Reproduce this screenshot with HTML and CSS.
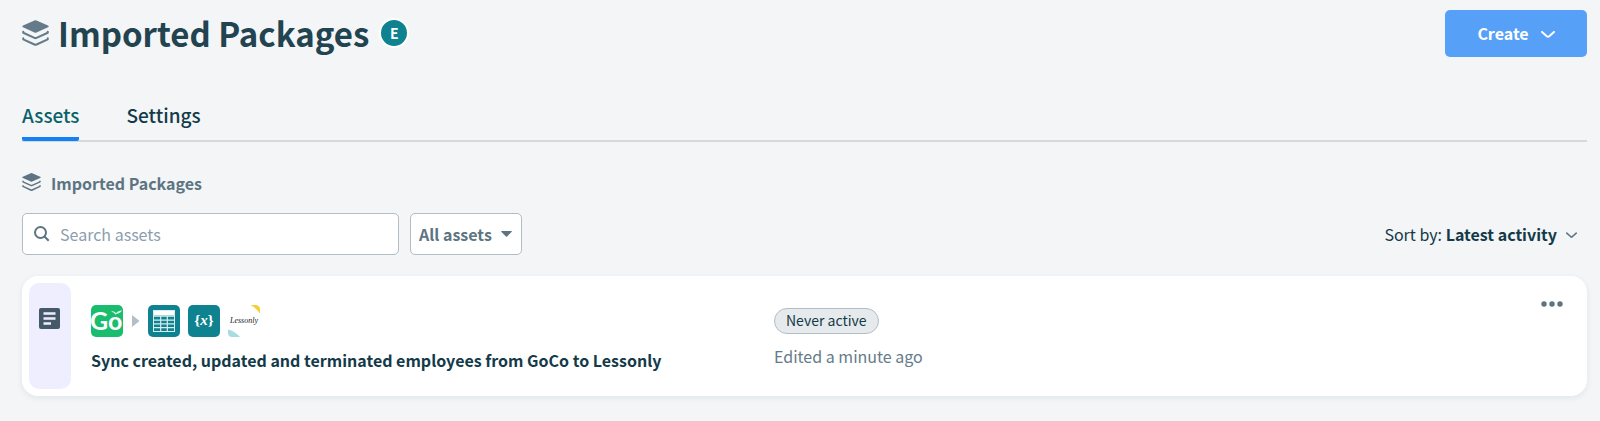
FILE: index.html
```html
<!DOCTYPE html>
<html lang="en">
<head>
<meta charset="utf-8">
<meta name="viewport" content="width=device-width, initial-scale=1">
<title>Imported Packages</title>
<link rel="stylesheet" href="styles.css">
</head>
<body>
<svg class="sprite" aria-hidden="true">
  <symbol id="layers" viewBox="0 0 26 25">
    <path d="M12 .4q1-.5 2 0l11 4.900q1.600.8 0 1.600l-11 5q-1 .5-2 0L1 6.900q-1.600-.8 0-1.600z" fill="currentColor"/>
    <path d="M1.200 11.300v.9L12 17.200q1 .5 2 0l10.800-5v-.9M1.200 17.700v.9L12 23.600q1 .5 2 0l10.800-5v-.9" fill="none" stroke="currentColor" stroke-width="2" stroke-linecap="round" stroke-linejoin="round"/>
  </symbol>
  <symbol id="chevron" viewBox="0 0 14 8">
    <path d="M1 1l4.800 4.300q1.200 1 2.400 0L13 1" fill="none" stroke="currentColor" stroke-width="2" stroke-linecap="round"/>
  </symbol>
</svg>
<main class="page">
  <header class="header">
    <svg class="header-icon" aria-hidden="true"><use href="#layers"/></svg>
    <h1 class="title">Imported Packages</h1>
    <span class="avatar">E</span>
    <button class="create" type="button">Create <svg class="create-chevron" aria-hidden="true"><use href="#chevron"/></svg></button>
  </header>
  <nav class="tabs">
    <a class="tab tab-active" href="#assets">Assets</a>
    <a class="tab" href="#settings">Settings</a>
  </nav>
  <div class="crumb">
    <svg class="crumb-icon" aria-hidden="true"><use href="#layers"/></svg>
    <span>Imported Packages</span>
  </div>
  <div class="toolbar">
    <label class="search">
      <svg class="search-icon" viewBox="0 0 16 16" aria-hidden="true"><circle cx="6.500" cy="6.500" r="5.500"/><path d="M10.500 10.500l4.200 4.200"/></svg>
      <input class="search-input" type="search" placeholder="Search assets" aria-label="Search assets">
    </label>
    <div class="filter">
      <select class="filter-select" aria-label="Asset type"><option>All assets</option></select>
      <svg class="filter-arrow" viewBox="0 0 11 6" aria-hidden="true"><path d="M.5 0h10q.7.300 0 1L6 5.600q-.5.400-1 0L.5 1q-.7-.7 0-1z"/></svg>
    </div>
    <button class="sort" type="button"><span>Sort by: <b>Latest activity</b></span><svg class="sort-chevron" aria-hidden="true"><use href="#chevron"/></svg></button>
  </div>
  <article class="card">
    <div class="kind">
      <svg class="kind-icon" viewBox="0 0 21 21" aria-hidden="true"><rect width="21" height="21" rx="2" fill="#455a68"/><path d="M4.500 5.500h12M4.500 10.500h12M4.500 15.500h7.500" stroke="#efeeff" stroke-width="2.400"/></svg>
    </div>
    <div class="recipe">
      <div class="apps">
        <svg class="app" viewBox="0 0 32 32" role="img" aria-label="GoCo">
          <clipPath id="tile"><rect width="32" height="32" rx="5"/></clipPath>
          <g clip-path="url(#tile)"><rect width="32" height="32" fill="#1abd6e"/>
          <text class="go" x="-1" y="25">Go</text>
          <path d="M20 6.500q3-.8 5 1.500Q27.500 5 31 5.500q-1.500 3-5.500 3.200l-1 1q-1-2.200-4.500-3.200z" fill="#dff7ea"/></g>
        </svg>
        <svg class="play" viewBox="0 0 7 12" aria-hidden="true"><path d="M0 0l7 5.500v1L0 12z" fill="#b4c0c9"/></svg>
        <svg class="app" viewBox="0 0 32 32" role="img" aria-label="Lookup table">
          <rect width="32" height="32" rx="5" fill="#0f8290"/>
          <rect x="5.500" y="5.500" width="21" height="21" fill="none" stroke="#d9edef"/>
          <path d="M6 6h20v4.500H6z" fill="#fff"/>
          <path d="M5.500 11.100h21M5.500 15.100h21M5.500 18.900h21M5.500 22.700h21M12.700 10.500v16M19.300 10.500v16" stroke="#d9edef" stroke-width="1.200"/>
        </svg>
        <svg class="app" viewBox="0 0 32 32" role="img" aria-label="Variables">
          <rect width="32" height="32" rx="5" fill="#0f8290"/>
          <text class="var" x="16" y="20">{<tspan class="var-x">x</tspan>}</text>
        </svg>
        <svg class="app" viewBox="0 0 32 32" role="img" aria-label="Lessonly">
          <path d="M22.500 0H27q5 0 5 5v3.500Q29 3.500 22.500 0z" fill="#f7cc2f"/>
          <path d="M0 24.500q7 1.500 12 7.500H4q-4 0-4-4z" fill="#a9dce0"/>
          <text class="lesson" x="16" y="18">Lessonly</text>
        </svg>
      </div>
      <h2 class="name">Sync created, updated and terminated employees from GoCo to Lessonly</h2>
    </div>
    <div class="status">
      <span class="pill">Never active</span>
      <p class="edited">Edited a minute ago</p>
    </div>
    <button class="more" type="button" aria-label="More actions"><svg class="more-icon" viewBox="0 0 22 6" aria-hidden="true"><circle cx="3" cy="3" r="2.700"/><circle cx="11" cy="3" r="2.700"/><circle cx="19" cy="3" r="2.700"/></svg></button>
  </article>
</main>
</body>
</html>
```

FILE: styles.css
```css
* { box-sizing: border-box; }
body {
  margin: 0;
  background: #f3f5f7;
  color: #133a48;
  font-family: "Noto Sans CJK JP", "Noto Sans", sans-serif;
  font-size: 16px;
  line-height: 24px;
}
button, input, select { font: inherit; color: inherit; }
button { border: 0; padding: 0; background: none; cursor: pointer; }
.sprite { display: none; }
.page { padding: 10px 13px 24px 22px; }
.header { display: flex; align-items: center; }
.header-icon { width: 27px; height: 26px; margin-bottom: 2px; color: #657b89; }
.title { margin: 0 0 2px 9px; font-size: 33px; line-height: 44px; font-weight: 700; color: #224350; }
.avatar {
  width: 30px; height: 30px; margin: 0 0 2px 10px;
  border: 2px solid #fff; border-radius: 50%;
  background: #0f8290; color: #fff;
  font-size: 14px; line-height: 26px; font-weight: 700; text-align: center;
}
.create {
  display: flex; align-items: center; justify-content: center; gap: 12px;
  width: 142px; height: 47px; margin-left: auto; padding-bottom: 1px;
  border-radius: 5px; background: #57a0f7; color: #fff; font-weight: 700;
}
.create-chevron { width: 14px; height: 8px; margin-top: 4px; }
.tabs {
  display: flex; gap: 47px; margin-top: 44px;
  border-bottom: 2px solid #d3d9dc;
  font-size: 19px; line-height: 28px; font-weight: 500;
}
.tab { padding-bottom: 8px; color: #133a48; text-decoration: none; border-bottom: 4px solid transparent; margin-bottom: -1px; }
.tab-active { color: #0a6268; border-bottom-color: #1580f5; border-radius: 2px; }
.crumb { display: flex; gap: 10px; margin-top: 29px; color: #5d7482; font-weight: 700; }
.crumb-icon { width: 19px; height: 18px; margin-top: 2px; }
.toolbar { display: flex; align-items: center; margin-top: 18px; }
.search {
  display: flex; align-items: center; gap: 10px; width: 377px; height: 42px;
  padding: 0 11px; border: 1px solid #b0bec7; border-radius: 5px; background: #fff;
}
.search-icon { width: 16px; height: 16px; fill: none; stroke: #5d7482; stroke-width: 2; }
.search-input { flex: 1; min-width: 0; padding: 0; border: 0; outline: 0; background: none; }
.search-input::placeholder { color: #8c9ead; opacity: 1; }
.filter { display: grid; align-items: center; margin-left: 11px; color: #5d7482; }
.filter-select, .filter-arrow { grid-area: 1 / 1; }
.filter-select {
  appearance: none; width: 112px; height: 42px; padding: 0 8px;
  border: 1px solid #b0bec7; border-radius: 5px; background: #fff; font-weight: 700;
}
.filter-arrow { width: 11px; height: 6px; margin-right: 10px; justify-self: end; fill: currentColor; pointer-events: none; }
.sort { display: flex; align-items: center; gap: 9px; margin: 0 10px 0 auto; }
.sort-chevron { width: 11px; height: 7px; margin-top: 2px; color: #5d7482; }
.card {
  display: flex; margin-top: 21px; padding: 7px;
  border-radius: 16px; background: #fff; box-shadow: 0 2px 6px #12404a14;
}
.kind { width: 42px; padding: 25px 1px 0 0; border-radius: 10px; background: #efeeff; text-align: center; }
.kind-icon { width: 21px; height: 21px; }
.recipe { flex: 0 0 683px; padding: 22px 0 17px 20px; }
.apps { display: flex; align-items: center; gap: 8px; }
.app { width: 32px; height: 32px; }
.play { width: 7px; height: 12px; margin: 0 1px; }
.go { font: 700 25px Lato, sans-serif; fill: #fff; }
.var { font: 700 15px "Liberation Serif", serif; fill: #fff; text-anchor: middle; }
.var-x { font-style: italic; }
.lesson { font: italic 8px "Liberation Serif", serif; fill: #222; text-anchor: middle; }
.name { margin: 11px 0 0; font-size: 16px; line-height: 24px; font-weight: 700; }
.status { flex: 1; padding: 25px 0 0 20px; }
.pill {
  display: block; width: fit-content; height: 26px; padding: 0 11px;
  border: 1px solid #b0bec7; border-radius: 13px; background: #e6eaec;
  font-size: 14px; line-height: 22px;
}
.edited { margin: 10px 0 0; color: #657b89; }
.more { align-self: flex-start; width: 32px; height: 24px; margin: 9px 12px 0 0; }
.more-icon { display: block; width: 22px; height: 6px; margin: 0 auto; fill: #5d7482; }
```
